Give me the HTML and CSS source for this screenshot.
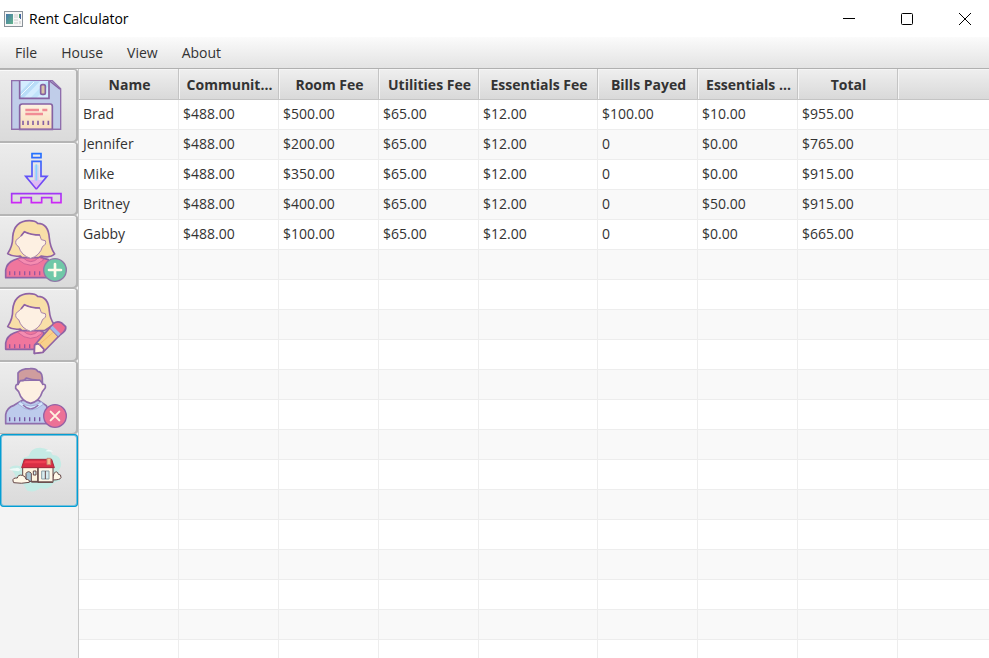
FILE: index.html
```
<!DOCTYPE html>
<html lang="en">
<head>
<meta charset="utf-8">
<title>Rent Calculator</title>
<link rel="stylesheet" href="styles.css">
</head>
<body>
<header class="titlebar">
  <svg class="app-icon" viewBox="0 0 19 16" aria-hidden="true">
    <defs><linearGradient id="screen" x2="1" y2="1"><stop stop-color="#4677a8"/><stop offset="1" stop-color="#62b58b"/></linearGradient></defs>
    <rect x=".5" y=".5" width="18" height="15" fill="#f7f7f7" stroke="#8b939a"/>
    <rect x="2" y="3" width="7" height="10" fill="url(#screen)"/>
    <path d="M10 4h4M10 6h4M10 9h4M10 12h4" stroke="#ccc"/>
    <path d="M15 3h2v4h-2z" fill="#4b9a72"/><path d="M16 3h1v5h-1z" fill="#4264a0"/>
    <path d="M15 10h2v3h-2z" fill="#ddd"/>
  </svg>
  <h1 class="title">Rent Calculator</h1>
  <div class="window-controls">
    <button class="window-button" aria-label="Minimize"><svg viewBox="0 0 14 14"><path d="M1 6.500h12"/></svg></button>
    <button class="window-button" aria-label="Maximize"><svg viewBox="0 0 14 14"><rect x="1.500" y="1.500" width="11" height="11" rx="1"/></svg></button>
    <button class="window-button" aria-label="Close"><svg viewBox="0 0 14 14"><path d="M1 1l12 12M13 1L1 13"/></svg></button>
  </div>
</header>
<nav class="menubar">
  <button class="menu">File</button>
  <button class="menu">House</button>
  <button class="menu">View</button>
  <button class="menu">About</button>
</nav>
<main class="workspace">
  <aside class="toolbar">
    <button class="tool" aria-label="Save">
      <svg viewBox="0 9 234 219">
        <defs><linearGradient id="label" x2="0" y2="1"><stop stop-color="#fdf3e4"/><stop offset="1" stop-color="#f7dcb9"/></linearGradient></defs>
        <path d="M35 44H157L182 68V190H35Z" fill="#c0cde9" stroke="#8f6eac" stroke-width="4"/>
        <path d="M59 45H146V97H59Z" fill="#d4edff"/>
        <path d="M59 80L92 46H120L70 97H59Z" fill="#b9ddf8"/><path d="M90 97L138 48H146V60L108 97Z" fill="#c0e4fa"/>
        <path d="M60 90L102 48" stroke="#f0faff" stroke-width="3"/>
        <path d="M59 44V97H147V44" fill="none" stroke="#8662a2" stroke-width="5"/>
        <rect x="122" y="56" width="14" height="29" rx="5" fill="#d9c4a8" stroke="#8662a2" stroke-width="5"/>
        <path d="M150 46L180 70" stroke="#8662a2" stroke-width="4"/>
        <path d="M59 190V121Q59 114 67 114H151Q157 114 157 121V190Z" fill="url(#label)" stroke="#8662a2" stroke-width="5"/>
        <path d="M76 132H117M127 132H142M76 144H129" stroke="#f18c95" stroke-width="7"/>
        <path d="M69 164V177M84 164V177M99 164V177M114 164V177M130 164V177M145 164V177" stroke="#8662a2" stroke-width="5"/>
        <path d="M35 190H182" stroke="#8f6eac" stroke-width="4"/>
      </svg>
    </button>
    <button class="tool" aria-label="Export">
      <svg viewBox="0 6 234 219">
        <defs>
          <linearGradient id="arrow" gradientUnits="userSpaceOnUse" x1="0" y1="40" x2="0" y2="190"><stop stop-color="#2372ff"/><stop offset=".6" stop-color="#7349f5"/><stop offset="1" stop-color="#d027f6"/></linearGradient>
          <linearGradient id="arrow-fill" x2="0" y2="1"><stop stop-color="#c4dcf5"/><stop offset="1" stop-color="#e7b2f3"/></linearGradient>
        </defs>
        <path d="M103 76H116V120H130L109 143L90 120H103Z" fill="url(#arrow-fill)"/>
        <g fill="none" stroke="url(#arrow)" stroke-width="5">
          <path d="M96 41H123V53H96Z"/>
          <path d="M96 64H123V109H141L110 146H108L77 109H96Z"/>
          <path d="M35 161H183V188H155V173H125V188H94V173H63V188H35Z"/>
        </g>
        <path d="M109 73V122" stroke="#87d2ff" stroke-width="5"/>
      </svg>
    </button>
    <button class="tool" aria-label="Add person">
      <svg viewBox="0 9 234 219">
        <g stroke="#8f63a5" stroke-width="5" stroke-linejoin="round">
          <path d="M17 197V174Q20 153 42 144L73 133H112L145 143L160 197Z" fill="#f0769d"/>
          <path d="M68 136Q92 162 117 136L132 143Q92 177 53 142Z" fill="#f58cb0" stroke="#cf6598" stroke-width="3"/>
          <path d="M23 125Q39 100 38 75Q42 27 88 26Q106 26 113 34Q145 34 148 78Q150 105 164 126Q151 139 124 132L116 137H66L60 132Q37 135 23 125Z" fill="#f8dfa8"/>
          <path d="M48 85L63 72L73 59Q95 70 119 69L124 83L136 86Q140 98 128 103Q119 132 92 139Q64 131 56 104Q44 98 48 85Z" fill="#fdf0e2" stroke="#a983ac" stroke-width="3"/>
          <path d="M63 72L73 59Q94 69 120 69" fill="none"/>
        </g>
        <path d="M29 178V190M44 178V190M59 178V190M74 178V190M89 178V190M104 178V190M119 178V190" stroke="#98569d" stroke-width="4"/>
        <circle cx="165" cy="174" r="34" fill="#70c8a8" stroke="#8e79a6" stroke-width="4"/>
        <path d="M165 156V192M147 174H183" stroke="#fffbea" stroke-width="8" stroke-linecap="round"/>
      </svg>
    </button>
    <button class="tool" aria-label="Edit person">
      <svg viewBox="0 6 234 219">
        <g stroke="#8f63a5" stroke-width="5" stroke-linejoin="round">
          <path d="M17 190V171Q20 150 42 141L73 130H112L132 140L120 190Z" fill="#f0769d"/>
          <path d="M68 133Q92 159 117 133L128 141Q92 174 53 139Z" fill="#f58cb0" stroke="#cf6598" stroke-width="3"/>
          <path d="M23 122Q39 97 38 72Q42 24 88 23Q106 23 113 31Q145 31 148 75Q150 98 162 115L133 134L116 134H66L60 129Q37 132 23 122Z" fill="#f8dfa8"/>
          <path d="M48 82L63 69L73 56Q95 67 119 66L124 80L136 83Q140 95 128 100Q119 129 92 136Q64 128 56 101Q44 95 48 82Z" fill="#fdf0e2" stroke="#a983ac" stroke-width="3"/>
          <path d="M63 69L73 56Q94 66 120 66" fill="none"/>
          <path d="M104 177L153 121L177 150L130 198L103 202Z" fill="#f8d18b"/>
          <path d="M104 177Q114 171 119 176L132 190L129 199L103 202Z" fill="#fff2df"/>
          <path d="M118 175L164 135" stroke="#f5bb72" stroke-width="3"/>
          <path d="M150 125L161 112Q172 104 184 110L197 122Q199 132 190 139L175 151Z" fill="#ee6c91"/>
          <path d="M154 123L178 147" stroke="#a4b9e9" stroke-width="10"/>
        </g>
        <path d="M29 175V187M44 175V187M59 175V187M74 175V187M89 175V187" stroke="#98569d" stroke-width="4"/>
      </svg>
    </button>
    <button class="tool" aria-label="Remove person">
      <svg viewBox="0 9 234 219">
        <g stroke="#8f6eac" stroke-width="5" stroke-linejoin="round">
          <path d="M17 197V170Q20 149 42 142L67 127H116L139 143L160 197Z" fill="#bdcbec"/>
          <path d="M60 131Q92 157 124 131L130 139Q92 173 54 138Z" fill="#d4e6fb" stroke="#a3b2dc" stroke-width="3"/>
          <path d="M54 79L56 67L126 66L128 79Q138 77 136 89L127 101Q119 129 92 136Q65 130 56 101L47 91Q46 78 54 79Z" fill="#fdf0e2"/>
          <path d="M54 79V45Q62 32 90 32Q108 30 113 40Q130 41 127 76L119 66Q98 67 79 60Q74 69 61 68Z" fill="#cf9d9e"/>
          <path d="M69 141Q92 164 115 141" fill="none" stroke-width="4"/>
        </g>
        <path d="M29 178V190M44 178V190M59 178V190M74 178V190M89 178V190M104 178V190M119 178V190" stroke="#7655a0" stroke-width="4"/>
        <circle cx="165" cy="174" r="34" fill="#ec7196" stroke="#9461a5" stroke-width="4"/>
        <path d="M152 161L178 187M178 161L152 187" stroke="#fff2df" stroke-width="6" stroke-linecap="round"/>
      </svg>
    </button>
    <button class="tool tool-focused" aria-label="House">
      <svg viewBox="0 12 234 219">
        <path d="M29 113Q40 103 60 108L69 84Q78 81 86 78Q93 53 120 53Q151 55 158 75Q181 76 183 98Q185 111 175 121L181 151Q161 157 158 163Q143 182 120 174Q105 189 82 182L70 163L48 155Q52 134 29 113Z" fill="#c5ebe5"/>
        <path d="M27 120Q35 113 46 115Q54 110 62 119L56 124ZM136 64Q143 56 153 61L160 65ZM50 108H66" fill="#effaf8"/>
        <g stroke="#654747" stroke-width="3" stroke-linejoin="round">
          <path d="M158 150Q159 139 162 130Q172 120 175 133Q184 132 183 143Q181 150 158 150Z" fill="#fff8e8"/>
          <path d="M68 112H114V154H68Z" fill="#fff4df"/>
          <path d="M114 112H159V157H114Z" fill="#fff8e8"/>
          <path d="M73 88H155L163 113H65Z" fill="#d92e45" stroke="#a52b3d"/>
          <path d="M141 85H152V104H141Z" fill="#f8bf92" stroke="#c98773"/>
          <path d="M78 154V130Q85 120 94 130V154Z" fill="#a5c5d4"/>
          <path d="M100 123H108V135H100Z" fill="#d7edf0"/>
          <path d="M125 123H147V147H125Z" fill="#d7edf0" stroke="#8ba1a8"/>
          <path d="M136 123V147M114 114V157" fill="none"/>
          <path d="M39 153Q37 143 52 144Q54 133 67 136Q77 138 78 148Q90 148 88 157Q64 162 41 158Z" fill="#fff8e8"/>
        </g>
        <path d="M77 93H139L136 100H72Z" fill="#ee4052"/>
        <path d="M94 156H158" stroke="#654747" stroke-width="4"/>
      </svg>
    </button>
  </aside>
  <section class="table-area">
    <table class="fees">
      <colgroup><col class="col"><col class="col"><col class="col"><col class="col"><col class="col-wide"><col class="col"><col class="col"><col class="col"><col></colgroup>
      <thead>
        <tr><th>Name</th><th>Communit...</th><th>Room Fee</th><th>Utilities Fee</th><th>Essentials Fee</th><th>Bills Payed</th><th>Essentials ...</th><th>Total</th><th></th></tr>
      </thead>
      <tbody>
        <tr><td>Brad</td><td>$488.00</td><td>$500.00</td><td>$65.00</td><td>$12.00</td><td>$100.00</td><td>$10.00</td><td>$955.00</td><td></td></tr>
        <tr><td>Jennifer</td><td>$488.00</td><td>$200.00</td><td>$65.00</td><td>$12.00</td><td>0</td><td>$0.00</td><td>$765.00</td><td></td></tr>
        <tr><td>Mike</td><td>$488.00</td><td>$350.00</td><td>$65.00</td><td>$12.00</td><td>0</td><td>$0.00</td><td>$915.00</td><td></td></tr>
        <tr><td>Britney</td><td>$488.00</td><td>$400.00</td><td>$65.00</td><td>$12.00</td><td>0</td><td>$50.00</td><td>$915.00</td><td></td></tr>
        <tr><td>Gabby</td><td>$488.00</td><td>$100.00</td><td>$65.00</td><td>$12.00</td><td>0</td><td>$0.00</td><td>$665.00</td><td></td></tr>
        <tr><td></td><td></td><td></td><td></td><td></td><td></td><td></td><td></td><td></td></tr>
        <tr><td></td><td></td><td></td><td></td><td></td><td></td><td></td><td></td><td></td></tr>
        <tr><td></td><td></td><td></td><td></td><td></td><td></td><td></td><td></td><td></td></tr>
        <tr><td></td><td></td><td></td><td></td><td></td><td></td><td></td><td></td><td></td></tr>
        <tr><td></td><td></td><td></td><td></td><td></td><td></td><td></td><td></td><td></td></tr>
        <tr><td></td><td></td><td></td><td></td><td></td><td></td><td></td><td></td><td></td></tr>
        <tr><td></td><td></td><td></td><td></td><td></td><td></td><td></td><td></td><td></td></tr>
        <tr><td></td><td></td><td></td><td></td><td></td><td></td><td></td><td></td><td></td></tr>
        <tr><td></td><td></td><td></td><td></td><td></td><td></td><td></td><td></td><td></td></tr>
        <tr><td></td><td></td><td></td><td></td><td></td><td></td><td></td><td></td><td></td></tr>
        <tr><td></td><td></td><td></td><td></td><td></td><td></td><td></td><td></td><td></td></tr>
        <tr><td></td><td></td><td></td><td></td><td></td><td></td><td></td><td></td><td></td></tr>
        <tr><td></td><td></td><td></td><td></td><td></td><td></td><td></td><td></td><td></td></tr>
        <tr><td></td><td></td><td></td><td></td><td></td><td></td><td></td><td></td><td></td></tr>
      </tbody>
    </table>
  </section>
</main>
</body>
</html>
```
FILE: styles.css
```
* {
  box-sizing: border-box;
}

body {
  margin: 0;
  height: 100vh;
  display: flex;
  flex-direction: column;
  overflow: hidden;
  background: #f4f4f4;
  color: #333;
  font: 14px/20px "Open Sans", "Noto Sans", sans-serif;
}

button {
  margin: 0;
  padding: 0;
  border: 0;
  background: none;
  color: inherit;
  font: inherit;
}

.titlebar {
  display: flex;
  align-items: center;
  flex: none;
  height: 37px;
  padding-left: 4px;
  background: #fff;
  color: #000;
}

.app-icon {
  width: 19px;
  height: 16px;
}

.title {
  margin: 0 0 0 6px;
  font-size: 14px;
  font-weight: 400;
}

.window-controls {
  display: flex;
  gap: 10px;
  margin-left: auto;
}

.window-button {
  display: flex;
  align-items: center;
  justify-content: center;
  width: 48px;
  height: 36px;
}

.window-button svg {
  width: 14px;
  height: 14px;
  fill: none;
  stroke: #000;
}

.menubar {
  display: flex;
  flex: none;
  height: 32px;
  padding: 0 3px;
  border-bottom: 1px solid #b0b0b0;
  background: linear-gradient(#fbfbfb, #e3e3e3);
}

.menu {
  padding: 0 12px;
}

.workspace {
  display: flex;
  flex: 1;
  min-height: 0;
}

.toolbar {
  display: flex;
  flex-direction: column;
  flex: none;
  width: 78px;
  overflow: hidden;
}

.tool {
  flex: none;
  height: 73px;
  border-radius: 0 4px 4px 0;
  background: linear-gradient(#ededed, #dadada);
  box-shadow: inset -1px 1px #b5b5b5, inset -2px -1px #b5b5b5, inset 0 2px #fafafa;
}

.tool svg {
  display: block;
  width: 78px;
  height: 73px;
}

.tool-focused {
  border-radius: 4px;
  box-shadow: inset 0 0 0 1px #039ed3, inset 0 0 0 2px #74bfdc;
}

.table-area {
  flex: 1;
  min-width: 0;
  overflow: hidden;
  border-left: 1px solid #c8c8c8;
  background: #fff;
}

.fees {
  width: 100%;
  table-layout: fixed;
  border-collapse: separate;
  border-spacing: 0;
}

.col {
  width: 100px;
}

.col-wide {
  width: 119px;
}

.fees th {
  height: 31px;
  padding: 2px 0 0 2px;
  border-right: 1px solid #c4c4c4;
  border-bottom: 1px solid #c4c4c4;
  background: linear-gradient(#efefef, #d9d9d9);
  box-shadow: inset 1px 1px #f5f5f5;
  font-weight: 700;
  white-space: nowrap;
}

.fees td {
  height: 30px;
  padding: 0 4px 2px;
  border-right: 1px solid #ededed;
  border-bottom: 1px solid #ededed;
}

.fees tbody tr:nth-child(even) {
  background: #f9f9f9;
}

.fees th:last-child,
.fees td:last-child {
  border-right: 0;
}
```
